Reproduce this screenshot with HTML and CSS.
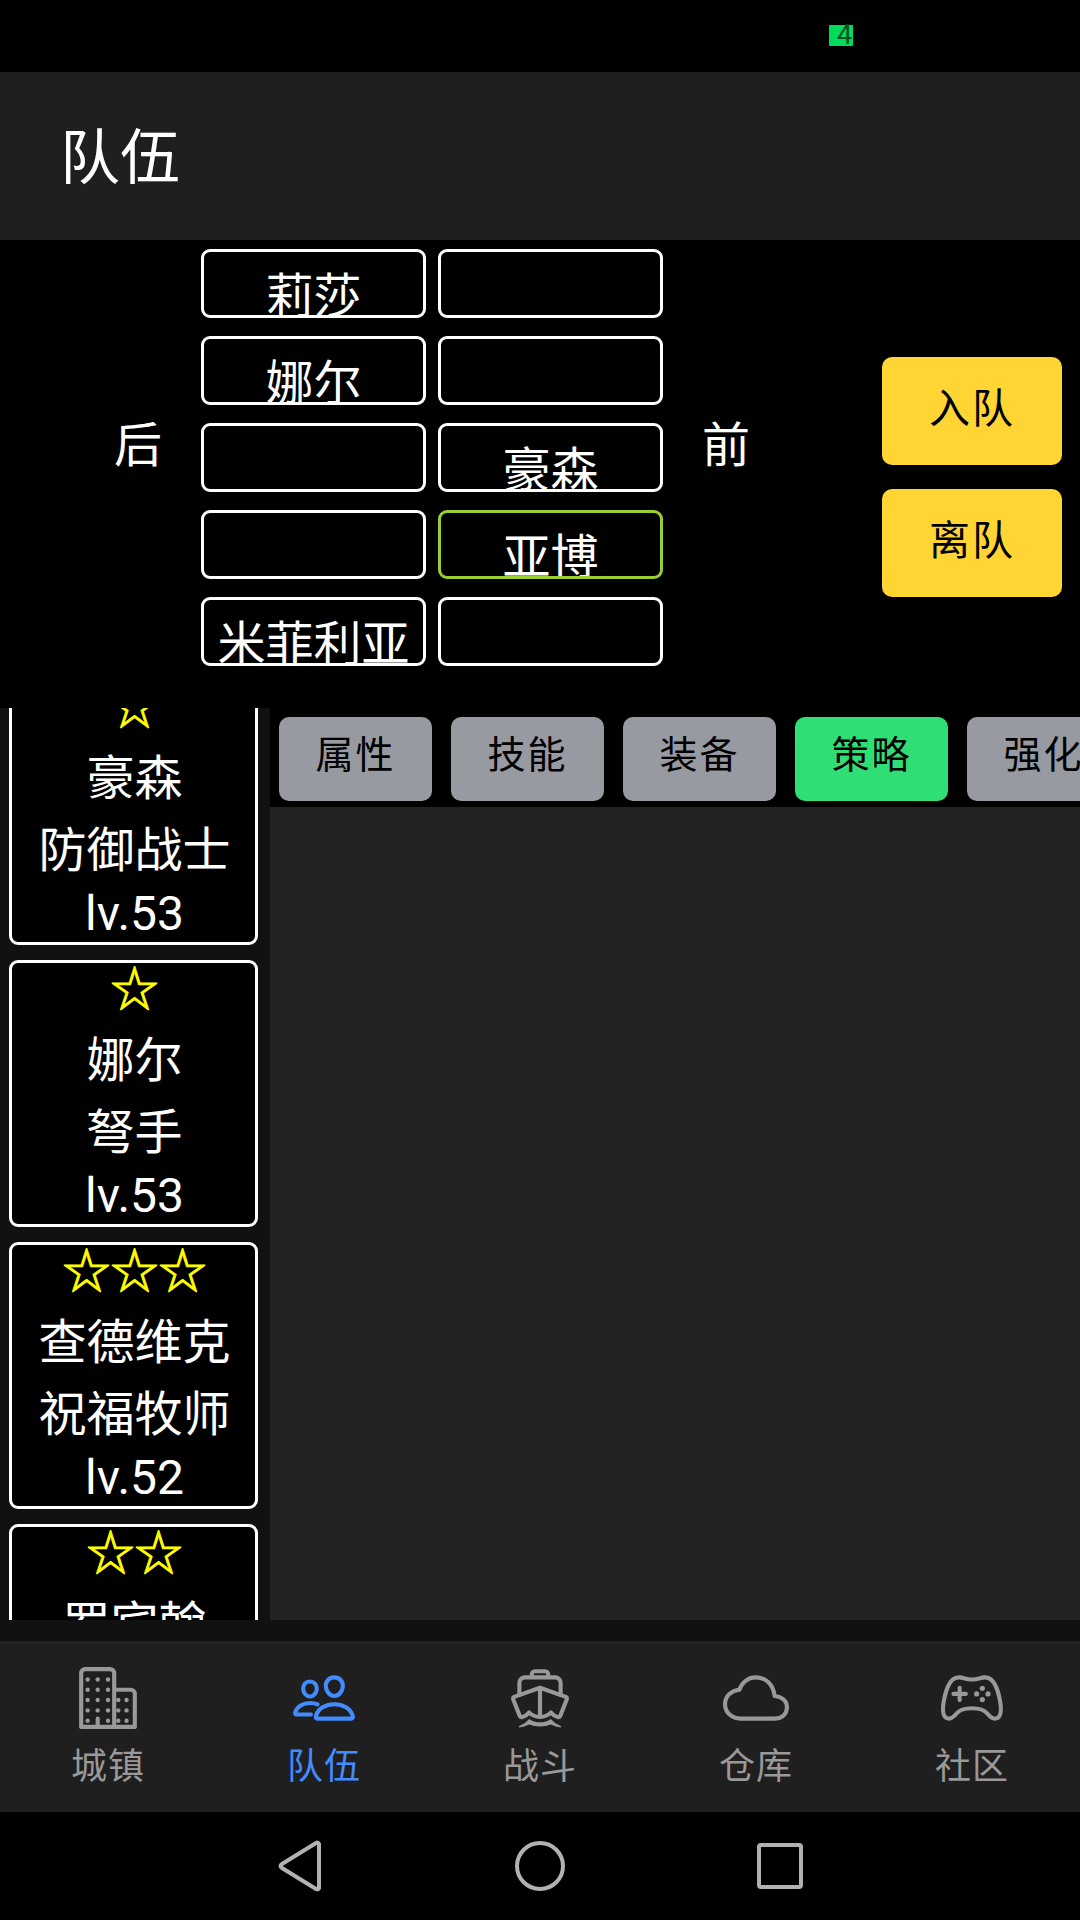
FILE: index.html
```html
<!DOCTYPE html>
<html lang="zh-CN">
  <head>
    <meta charset="UTF-8" />
    <meta name="viewport" content="width=device-width, initial-scale=1.0" />
    <title>队伍</title>
    <link rel="stylesheet" href="styles.css" />
  </head>
  <body>
    <div class="status-bar"><span class="battery">4</span></div>

    <header class="header">
      <h1>队伍</h1>
    </header>

    <section class="formation">
      <span class="side">后</span>
      <div class="board">
        <button class="slot">莉莎</button>
        <button class="slot" aria-label="空位"></button>
        <button class="slot">娜尔</button>
        <button class="slot" aria-label="空位"></button>
        <button class="slot" aria-label="空位"></button>
        <button class="slot">豪森</button>
        <button class="slot" aria-label="空位"></button>
        <button class="slot selected">亚博</button>
        <button class="slot">米菲利亚</button>
        <button class="slot" aria-label="空位"></button>
      </div>
      <span class="side">前</span>
      <div class="actions">
        <button class="action">入队</button>
        <button class="action">离队</button>
      </div>
    </section>

    <main class="main">
      <div class="roster">
        <ul class="heroes">
          <li class="hero">
            <span class="stars">☆</span>
            <span>豪森</span>
            <span>防御战士</span>
            <span class="level">lv.53</span>
          </li>
          <li class="hero">
            <span class="stars">☆</span>
            <span>娜尔</span>
            <span>弩手</span>
            <span class="level">lv.53</span>
          </li>
          <li class="hero">
            <span class="stars">☆☆☆</span>
            <span>查德维克</span>
            <span>祝福牧师</span>
            <span class="level">lv.52</span>
          </li>
          <li class="hero">
            <span class="stars">☆☆</span>
            <span>罗宾翰</span>
          </li>
        </ul>
      </div>
      <div class="detail">
        <div class="tabs">
          <button class="tab">属性</button>
          <button class="tab">技能</button>
          <button class="tab">装备</button>
          <button class="tab active">策略</button>
          <button class="tab">强化</button>
        </div>
      </div>
    </main>

    <nav class="tab-bar">
      <a href="#town">
        <svg class="icon" viewBox="0 0 512 512">
          <path d="M176 416v64M80 32h192a32 32 0 0132 32v416H48V64a32 32 0 0132-32zM304 192h128a32 32 0 0132 32v256H304z" />
          <g class="solid">
            <circle cx="98" cy="112" r="17" /><circle cx="98" cy="192" r="17" /><circle cx="98" cy="272" r="17" /><circle cx="98" cy="352" r="17" /><circle cx="98" cy="432" r="17" />
            <circle cx="176" cy="112" r="17" /><circle cx="176" cy="192" r="17" /><circle cx="176" cy="272" r="17" /><circle cx="176" cy="352" r="17" />
            <circle cx="256" cy="112" r="17" /><circle cx="256" cy="192" r="17" /><circle cx="256" cy="272" r="17" /><circle cx="256" cy="352" r="17" /><circle cx="256" cy="432" r="17" />
            <circle cx="336" cy="272" r="17" /><circle cx="336" cy="352" r="17" /><circle cx="336" cy="432" r="17" />
            <circle cx="400" cy="272" r="17" /><circle cx="400" cy="352" r="17" /><circle cx="400" cy="432" r="17" />
          </g>
        </svg>
        <span>城镇</span>
      </a>
      <a href="#team" class="current" aria-current="page">
        <svg class="icon" viewBox="0 0 512 512">
          <path d="M402 168c-2.93 40.67-33.1 72-66 72s-63.12-31.32-66-72c-3-42.31 26.37-72 66-72s69 30.46 66 72z" />
          <path d="M336 304c-65.17 0-127.84 32.37-143.54 95.41-2.08 8.34 3.15 16.59 11.72 16.59h263.65c8.57 0 13.77-8.25 11.72-16.59C463.85 335.36 401.18 304 336 304z" />
          <path d="M200 185.94c-2.34 32.48-26.72 58.06-53 58.06s-50.7-25.57-53-58.06C91.61 152.15 115.34 128 147 128s55.39 24.77 53 57.94z" />
          <path d="M206 306c-18.05-8.27-37.93-11.45-59-11.45-52 0-102.1 25.85-114.65 76.2-1.65 6.66 2.53 13.25 9.37 13.25H154" />
        </svg>
        <span>队伍</span>
      </a>
      <a href="#battle">
        <svg class="icon" viewBox="0 0 512 512">
          <path d="M192 96V72a24 24 0 0124-24h80a24 24 0 0124 24v24M96 230v-90a44 44 0 0144-44h232a44 44 0 0144 44v90" />
          <path d="M256 176L56 247q-12 6-7 20l50 128q6 13 20 9 30-8 52-36 33 35 85 35t85-35q22 28 52 36 14 4 20-9l50-128q5-14-7-20zM256 176v224" />
          <path class="solid" d="M96 474q44-18 76-56 36 26 84 26t84-26q32 38 76 56 10 8 0 11-36-4-76-23-36 16-84 16t-84-16q-40 19-76 23-10-3 0-11z" />
        </svg>
        <span>战斗</span>
      </a>
      <a href="#storage">
        <svg class="icon" viewBox="0 0 512 512">
          <path d="M400 240c-8.89-89.54-71-144-144-144-69 0-113.44 48.2-128 96-60 6-112 43.59-112 112 0 66 54 112 120 112h260c55 0 100-27.44 100-88 0-59.82-53-85.76-96-88z" />
        </svg>
        <span>仓库</span>
      </a>
      <a href="#community">
        <svg class="icon" viewBox="0 0 512 512">
          <path d="M467.51 248.83c-18.4-83.18-45.69-136.24-89.43-149.17A91.5 91.5 0 00352 96c-26.89 0-48.11 16-96 16s-69.15-16-96-16a99.09 99.09 0 00-27.2 3.66C89 112.59 61.94 165.7 43.33 248.83c-19 84.91-15.56 152 21.58 164.88 26 9 49.25-9.61 71.27-37 25-31.2 55.79-40.8 119.82-40.8s93.62 9.6 118.66 40.8c22 27.41 46.11 45.79 71.42 37.16 41.02-14.01 40.44-79.13 21.43-165.04z" />
          <path d="M160 176v96M208 224h-96" />
          <g class="solid">
            <circle cx="292" cy="224" r="20" /><circle cx="336" cy="180" r="20" /><circle cx="336" cy="268" r="20" /><circle cx="380" cy="224" r="20" />
          </g>
        </svg>
        <span>社区</span>
      </a>
    </nav>

    <div class="system-bar">
      <button aria-label="返回">
        <svg viewBox="0 0 60 60"><path d="M49 8v44q-1 2-3 1L12 32q-3-2 0-4L46 7q2-1 3 1z" /></svg>
      </button>
      <button aria-label="主屏幕">
        <svg viewBox="0 0 60 60"><circle cx="30" cy="30" r="23" /></svg>
      </button>
      <button aria-label="最近任务">
        <svg viewBox="0 0 60 60"><rect x="9" y="9" width="42" height="42" rx="2" /></svg>
      </button>
    </div>
  </body>
</html>
```
FILE: styles.css
```css
* {
  box-sizing: border-box;
}

body {
  margin: 0;
  height: 100vh;
  display: flex;
  flex-direction: column;
  overflow: hidden;
  background-color: #111;
  color: #fff;
  font-family: Roboto, "Noto Sans CJK SC", sans-serif;
  font-size: 48px;
}

button {
  margin: 0;
  padding: 0;
  border: none;
  font-family: inherit;
  cursor: pointer;
}

.status-bar {
  height: 72px;
  flex: none;
  display: flex;
  align-items: center;
  justify-content: flex-end;
  padding: 0 227px 2px 0;
  background-color: #000;
}

.battery {
  width: 24px;
  height: 21px;
  padding-left: 8px;
  border-radius: 1px;
  background-color: #00dc5a;
  color: #064d20;
  font-size: 27px;
  line-height: 21px;
}

.header {
  height: 168px;
  flex: none;
  display: flex;
  align-items: center;
  padding: 6px 60px 0;
  background-color: #1f1f1f;
}

h1 {
  margin: 0;
  font-size: 60px;
  font-weight: 400;
  line-height: 72px;
}

.formation {
  flex: none;
  display: flex;
  padding: 9px 18px 42px 75px;
  background-color: #000;
}

.side {
  width: 126px;
  align-self: center;
  padding-bottom: 24px;
  text-align: center;
  line-height: 72px;
}

.board {
  flex: 1;
  display: grid;
  grid-template-columns: 1fr 1fr;
  gap: 18px 12px;
}

.slot {
  height: 69px;
  padding-top: 9px;
  overflow: hidden;
  border: 3px solid #fff;
  border-radius: 9px;
  background-color: #000;
  color: #fff;
  font-size: 48px;
  line-height: 72px;
}

.selected {
  border-color: #9acd32;
}

.actions {
  width: 180px;
  margin-left: 93px;
  padding-top: 38px;
  align-self: center;
  display: flex;
  flex-direction: column;
  gap: 24px;
}

.action {
  height: 108px;
  padding-bottom: 12px;
  border-radius: 10px;
  background-color: #ffd534;
  color: #000;
  font-size: 41px;
  letter-spacing: 2px;
}

.main {
  flex: 1;
  min-height: 0;
  display: flex;
  margin-bottom: 21px;
}

.roster {
  width: 25%;
  overflow: hidden;
  padding: 0 12px 0 9px;
}

/* list is scrolled a little way down */
.heroes {
  display: flex;
  flex-direction: column;
  gap: 15px;
  margin: -30px 0 0;
  padding: 0;
  list-style: none;
}

.hero {
  height: 267px;
  flex: none;
  display: flex;
  flex-direction: column;
  padding-left: 2px;
  border: 3px solid #fff;
  border-radius: 9px;
  background-color: #000;
  text-align: center;
  line-height: 72px;
}

.stars {
  height: 62px;
  color: #ff0;
  line-height: 53px;
  -webkit-text-stroke: 1px #ff0;
}

.level {
  line-height: 53px;
}

.detail {
  flex: 1;
  min-width: 0;
  background-color: #222;
}

.tabs {
  display: flex;
  gap: 19px;
  padding: 9px 9px 6px;
  overflow: hidden;
  background-color: #000;
}

.tab {
  width: 153px;
  height: 84px;
  flex: none;
  padding-bottom: 15px;
  border-radius: 10px;
  background-color: #989aa2;
  color: #000;
  font-size: 38px;
  letter-spacing: 2px;
}

.active {
  background-color: #2fdf75;
}

.tab-bar {
  height: 171px;
  flex: none;
  display: flex;
  border-top: 3px solid #222;
  background-color: #1f1f1f;
}

.tab-bar a {
  flex: 1;
  display: flex;
  flex-direction: column;
  align-items: center;
  gap: 12px;
  padding-top: 21px;
  color: #999;
  font-size: 36px;
  line-height: 48px;
  letter-spacing: 1px;
  text-decoration: none;
}

.tab-bar .current {
  color: #428cff;
}

.icon {
  width: 66px;
  height: 66px;
  overflow: visible;
  fill: none;
  stroke: currentColor;
  stroke-width: 32;
  stroke-linecap: round;
  stroke-linejoin: round;
}

.solid {
  fill: currentColor;
  stroke: none;
}

.system-bar {
  height: 108px;
  flex: none;
  display: flex;
  align-items: center;
  justify-content: center;
  gap: 180px;
  background-color: #000;
}

.system-bar button {
  height: 60px;
  background: none;
}

.system-bar svg {
  display: block;
  width: 60px;
  height: 60px;
  fill: none;
  stroke: #b2b2b2;
  stroke-width: 4;
}
```
